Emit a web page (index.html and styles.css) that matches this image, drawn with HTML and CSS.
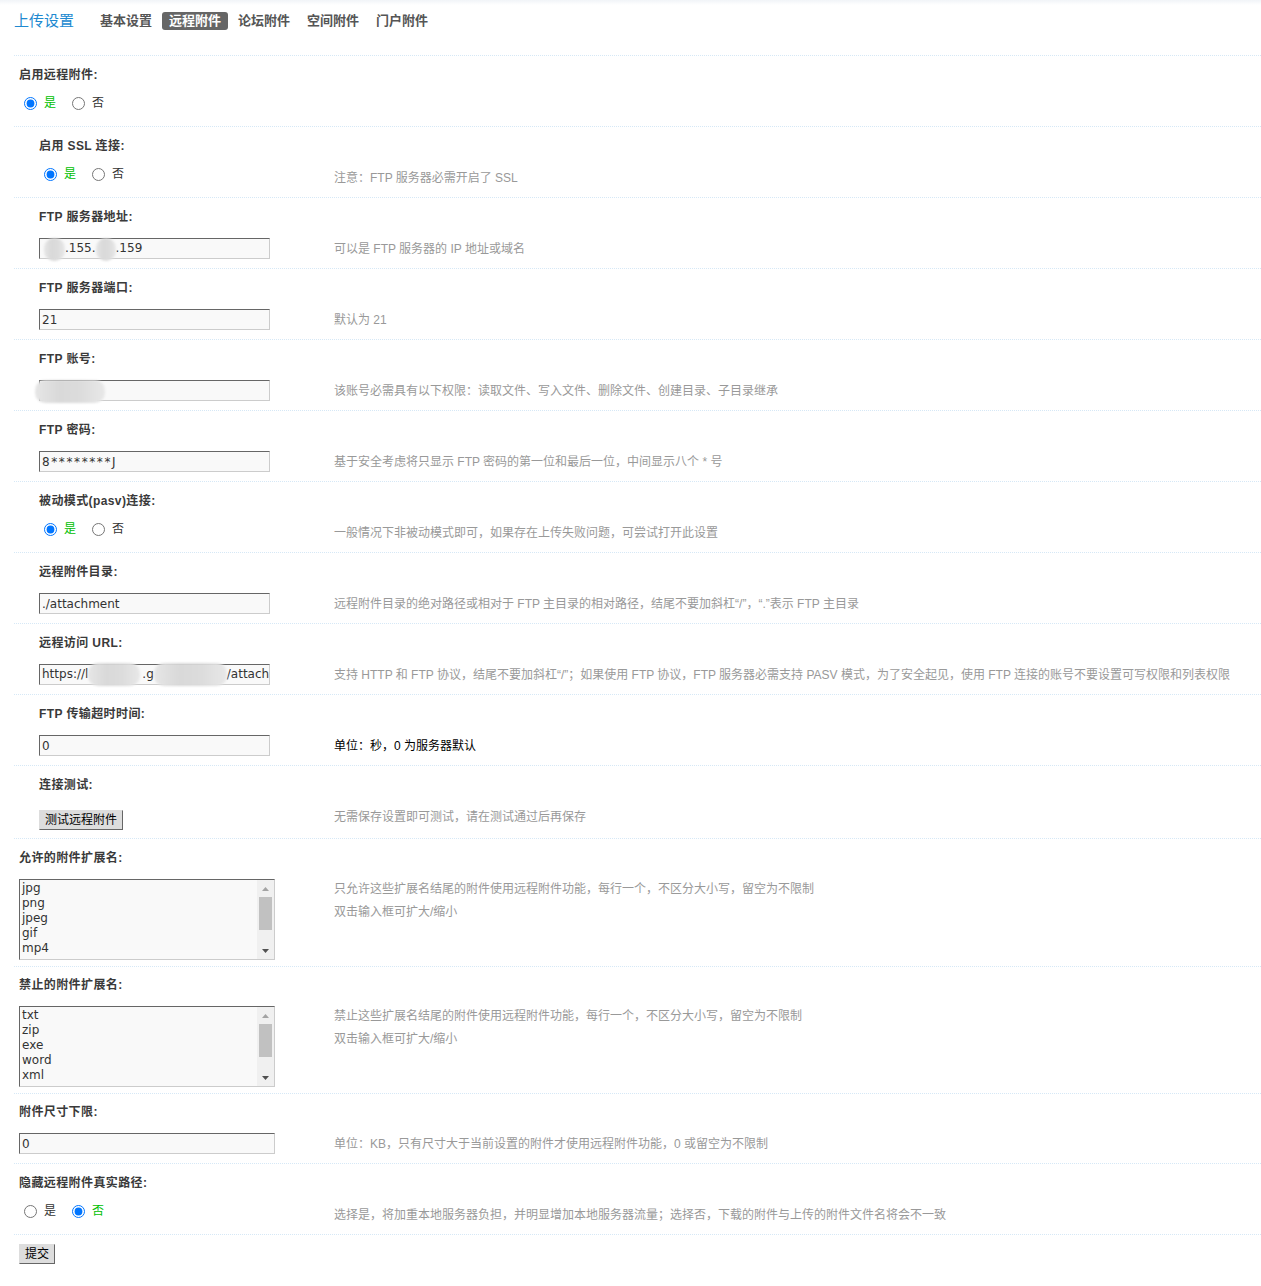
FILE: index.html
```html
<!DOCTYPE html>
<html lang="zh-CN">
<head>
<meta charset="utf-8">
<title>上传设置 - 远程附件</title>
<link rel="stylesheet" href="styles.css">
</head>
<body>
<div class="page">
  <div class="header">
    <h3 class="title">上传设置</h3>
    <ul class="tabs">
      <li><a>基本设置</a></li>
      <li><a class="current">远程附件</a></li>
      <li><a>论坛附件</a></li>
      <li><a>空间附件</a></li>
      <li><a>门户附件</a></li>
    </ul>
  </div>

  <div class="item">
    <div class="item-title">启用远程附件:</div>
    <div class="item-row">
      <div class="rowform">
        <div class="radios">
          <label class="radio"><input type="radio" name="on" checked><span class="on">是</span></label>
          <label class="radio"><input type="radio" name="on"><span>否</span></label>
        </div>
      </div>
      <div class="tips"></div>
    </div>
  </div>

  <div class="sub">
    <div class="item">
      <div class="item-title">启用 SSL 连接:</div>
      <div class="item-row">
        <div class="rowform">
          <div class="radios">
            <label class="radio"><input type="radio" name="ssl" checked><span class="on">是</span></label>
            <label class="radio"><input type="radio" name="ssl"><span>否</span></label>
          </div>
        </div>
        <div class="tips">注意：FTP 服务器必需开启了 SSL</div>
      </div>
    </div>

    <div class="item">
      <div class="item-title">FTP 服务器地址:</div>
      <div class="item-row">
        <div class="rowform">
          <div class="txt fake"><span class="blur b-a1"></span>.155.<span class="blur b-a2"></span>.159</div>
        </div>
        <div class="tips">可以是 FTP 服务器的 IP 地址或域名</div>
      </div>
    </div>

    <div class="item">
      <div class="item-title">FTP 服务器端口:</div>
      <div class="item-row">
        <div class="rowform"><input type="text" class="txt" value="21"></div>
        <div class="tips">默认为 21</div>
      </div>
    </div>

    <div class="item">
      <div class="item-title">FTP 账号:</div>
      <div class="item-row">
        <div class="rowform">
          <div class="txt fake"><span class="blur b-acct"></span></div>
        </div>
        <div class="tips">该账号必需具有以下权限：读取文件、写入文件、删除文件、创建目录、子目录继承</div>
      </div>
    </div>

    <div class="item">
      <div class="item-title">FTP 密码:</div>
      <div class="item-row">
        <div class="rowform"><input type="text" class="txt pwd" value="8********J"></div>
        <div class="tips">基于安全考虑将只显示 FTP 密码的第一位和最后一位，中间显示八个 * 号</div>
      </div>
    </div>

    <div class="item">
      <div class="item-title">被动模式(pasv)连接:</div>
      <div class="item-row">
        <div class="rowform">
          <div class="radios">
            <label class="radio"><input type="radio" name="pasv" checked><span class="on">是</span></label>
            <label class="radio"><input type="radio" name="pasv"><span>否</span></label>
          </div>
        </div>
        <div class="tips">一般情况下非被动模式即可，如果存在上传失败问题，可尝试打开此设置</div>
      </div>
    </div>

    <div class="item">
      <div class="item-title">远程附件目录:</div>
      <div class="item-row">
        <div class="rowform"><input type="text" class="txt" value="./attachment"></div>
        <div class="tips">远程附件目录的绝对路径或相对于 FTP 主目录的相对路径，结尾不要加斜杠“/”，“.”表示 FTP 主目录</div>
      </div>
    </div>

    <div class="item">
      <div class="item-title">远程访问 URL:</div>
      <div class="item-row">
        <div class="rowform">
          <div class="txt fake clip">https://l<span class="blur b-u1"></span>.g<span class="blur b-u2"></span>/attach</div>
        </div>
        <div class="tips">支持 HTTP 和 FTP 协议，结尾不要加斜杠“/”；如果使用 FTP 协议，FTP 服务器必需支持 PASV 模式，为了安全起见，使用 FTP 连接的账号不要设置可写权限和列表权限</div>
      </div>
    </div>

    <div class="item">
      <div class="item-title">FTP 传输超时时间:</div>
      <div class="item-row">
        <div class="rowform"><input type="text" class="txt" value="0"></div>
        <div class="tips dark">单位：秒，0 为服务器默认</div>
      </div>
    </div>

    <div class="item">
      <div class="item-title">连接测试:</div>
      <div class="item-row test">
        <div class="rowform"><button type="button" class="btn">测试远程附件</button></div>
        <div class="tips">无需保存设置即可测试，请在测试通过后再保存</div>
      </div>
    </div>
  </div>

  <div class="item">
    <div class="item-title">允许的附件扩展名:</div>
    <div class="item-row area">
      <div class="rowform">
        <div class="tarea-wrap">
          <textarea class="tarea" rows="5">jpg
png
jpeg
gif
mp4</textarea>
          <div class="scrollbar">
            <span class="sb-btn"><svg width="7" height="4" viewBox="0 0 7 4"><polygon points="3.5,0 7,4 0,4" fill="#a3a3a3"/></svg></span>
            <span class="sb-thumb"></span>
            <span class="sb-btn sb-down"><svg width="7" height="4" viewBox="0 0 7 4"><polygon points="0,0 7,0 3.5,4" fill="#505050"/></svg></span>
          </div>
        </div>
      </div>
      <div class="tips">
        <div>只允许这些扩展名结尾的附件使用远程附件功能，每行一个，不区分大小写，留空为不限制</div>
        <div class="second">双击输入框可扩大/缩小</div>
      </div>
    </div>
  </div>

  <div class="item">
    <div class="item-title tight">禁止的附件扩展名:</div>
    <div class="item-row area">
      <div class="rowform">
        <div class="tarea-wrap">
          <textarea class="tarea" rows="5">txt
zip
exe
word
xml</textarea>
          <div class="scrollbar">
            <span class="sb-btn"><svg width="7" height="4" viewBox="0 0 7 4"><polygon points="3.5,0 7,4 0,4" fill="#a3a3a3"/></svg></span>
            <span class="sb-thumb"></span>
            <span class="sb-btn sb-down"><svg width="7" height="4" viewBox="0 0 7 4"><polygon points="0,0 7,0 3.5,4" fill="#505050"/></svg></span>
          </div>
        </div>
      </div>
      <div class="tips">
        <div>禁止这些扩展名结尾的附件使用远程附件功能，每行一个，不区分大小写，留空为不限制</div>
        <div class="second">双击输入框可扩大/缩小</div>
      </div>
    </div>
  </div>

  <div class="item">
    <div class="item-title tight">附件尺寸下限:</div>
    <div class="item-row">
      <div class="rowform"><input type="text" class="txt wide" value="0"></div>
      <div class="tips">单位：KB，只有尺寸大于当前设置的附件才使用远程附件功能，0 或留空为不限制</div>
    </div>
  </div>

  <div class="item">
    <div class="item-title">隐藏远程附件真实路径:</div>
    <div class="item-row">
      <div class="rowform">
        <div class="radios">
          <label class="radio"><input type="radio" name="hide"><span>是</span></label>
          <label class="radio"><input type="radio" name="hide" checked><span class="on">否</span></label>
        </div>
      </div>
      <div class="tips">选择是，将加重本地服务器负担，并明显增加本地服务器流量；选择否，下载的附件与上传的附件文件名将会不一致</div>
    </div>
  </div>

  <div class="item submit">
    <button type="submit" class="btn">提交</button>
  </div>
</div>
</body>
</html>
```
FILE: styles.css
```css
* { box-sizing: border-box; }

body {
  margin: 0;
  font: 12px "Liberation Sans", "Noto Sans CJK SC", sans-serif;
  color: #333;
  background: #fff linear-gradient(#f1f4f8, #fff) no-repeat;
  background-size: 100% 5px;
}

.page {
  padding-left: 14px;
  padding-bottom: 20px;
}

/* header */
.header {
  display: flex;
  align-items: flex-start;
  height: 55px;
  padding-top: 12px;
}

.title {
  margin: 0 19px 0 0;
  font-size: 15px;
  font-weight: normal;
  line-height: 18px;
  color: #2089d0;
  white-space: nowrap;
}

.tabs {
  display: flex;
  margin: 0;
  padding: 0;
  list-style: none;
}

.tabs a {
  display: block;
  padding: 0 7px;
  margin-right: 3px;
  line-height: 18px;
  font-size: 13px;
  font-weight: bold;
  color: #555;
  border-radius: 3px;
}

.tabs a.current {
  background: #666;
  color: #fff;
}

/* rows */
.item {
  border-top: 1px dotted #d6e8f6;
}

.item-title {
  height: 31px;
  padding: 10px 0 0 5px;
  line-height: 18px;
  font-weight: bold;
  color: #3a3a3a;
  letter-spacing: 0.4px;
  white-space: nowrap;
}

.item-title.tight { height: 30px; padding-top: 9px; }

.item-row {
  display: grid;
  grid-template-columns: 320px 1fr;
  padding: 9px 0;
}

.rowform { padding-left: 5px; }

.sub .item-title,
.sub .rowform { padding-left: 25px; }

.tips {
  padding-top: 2px;
  line-height: 19px;
  color: #999;
  white-space: nowrap;
}

.tips.dark { color: #000; }

.tips .second { margin-top: 4px; }

.item-row.test { padding-bottom: 8px; }
.item-row.area { padding-bottom: 6px; }
.item-row.area .tips { padding-top: 1px; }

/* inputs */
.txt {
  display: block;
  width: 256px;
  height: 21px;
  margin: 0;
  padding: 0 2px;
  border: 1px solid;
  border-color: #666 #ccc #ccc #666;
  background: #f9f9f9;
  color: #333;
  font: 12px/19px "DejaVu Sans", "Noto Sans CJK SC", sans-serif;
}

.sub .txt { width: 231px; }

.txt.pwd { letter-spacing: 1.6px; }

.fake {
  display: flex;
  align-items: center;
  white-space: nowrap;
  overflow: visible;
}

.fake.clip { overflow-x: clip; }

.blur {
  display: inline-block;
  flex: none;
  height: 23px;
  border-radius: 10px;
  background: linear-gradient(90deg, #e6e6e6, #d9d9d9 35%, #dcdcdc 65%, #e8e8e8);
  filter: blur(1px);
}

.b-a1 { width: 21px; margin: -1px 0 -3px 2px; }
.b-a2 { width: 20px; margin: -1px 0 -3px 0; }
.b-acct { width: 70px; margin: 0 0 -2px -7px; }
.b-u1 { width: 52px; margin: -2px 2px -1px 0; }
.b-u2 { width: 73px; margin: -2px 0 -1px 0; }

/* textarea with drawn scrollbar */
.tarea-wrap {
  position: relative;
  width: 256px;
  height: 81px;
}

.tarea {
  display: block;
  width: 256px;
  height: 81px;
  margin: 0;
  padding: 1px 19px 1px 2px;
  border: 1px solid;
  border-color: #666 #ccc #ccc #666;
  background: #f9f9f9;
  color: #333;
  font: 12px/15px "DejaVu Sans", "Noto Sans CJK SC", sans-serif;
  resize: none;
  overflow: hidden;
}

.scrollbar {
  position: absolute;
  top: 1px;
  right: 1px;
  bottom: 1px;
  width: 17px;
  display: flex;
  flex-direction: column;
  background: #f0f0f0;
}

.sb-btn {
  display: flex;
  align-items: center;
  justify-content: center;
  height: 17px;
  flex: none;
}

.sb-btn svg { display: block; }

.sb-thumb {
  display: block;
  height: 33px;
  margin: 0 2px;
  background: #c1c1c1;
}

.sb-down { margin-top: auto; }

/* radios */
.radios {
  display: flex;
  align-items: flex-start;
  height: 21px;
}

.radio {
  display: flex;
  align-items: center;
  line-height: 14px;
  margin-right: 11px;
  color: #333;
}

.radio input {
  width: 13px;
  height: 13px;
  margin: 0 3px 0 5px;
}

.radio span { padding-left: 4px; }

.radio .on { color: #00c000; }

/* buttons */
.btn {
  height: 20px;
  margin: 4px 0 0;
  padding: 2px 5px;
  border: 1px solid;
  border-color: #ddd #666 #666 #ddd;
  background: #ddd;
  color: #000;
  font: 12px/14px "Liberation Sans", "Noto Sans CJK SC", sans-serif;
  cursor: pointer;
}

.submit { padding: 9px 0 0 5px; }
.submit .btn { margin: 0; }
```
